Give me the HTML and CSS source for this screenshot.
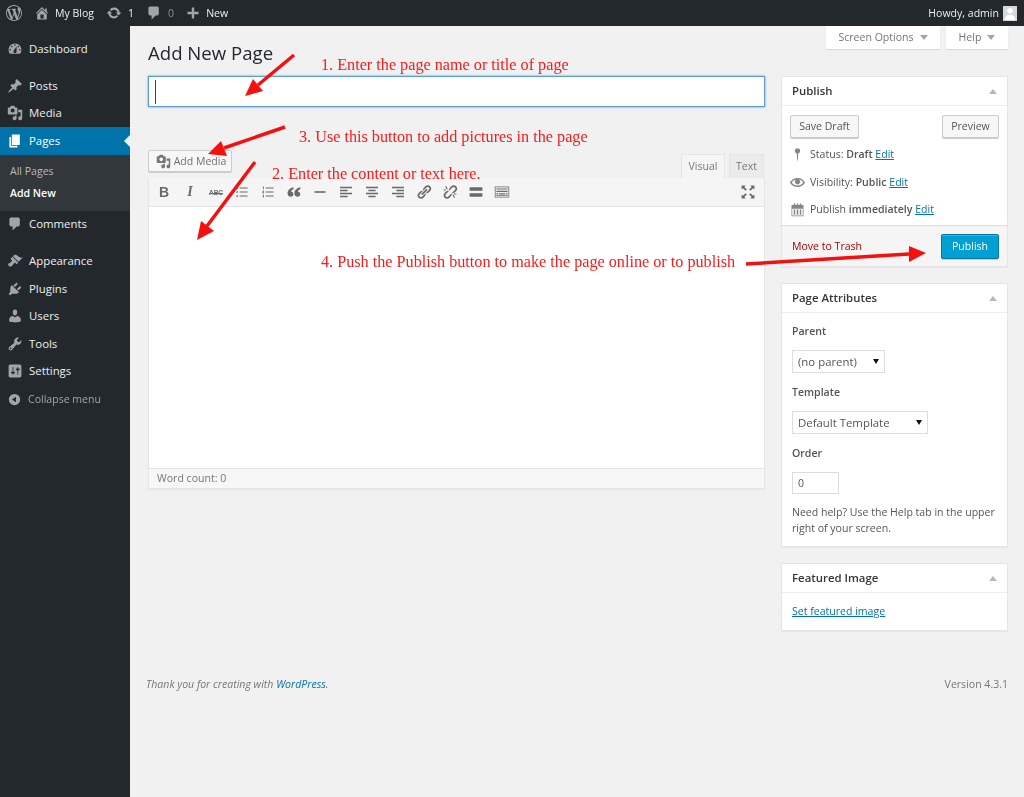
FILE: index.html
```html
<!DOCTYPE html>
<html lang="en">
<head>
<meta charset="utf-8">
<title>Add New Page</title>
<link rel="stylesheet" href="styles.css">
</head>
<body>
<header class="topbar">
  <div class="top-left">
    <svg class="ic-wp" viewBox="0 0 20 20"><path d="M20 10c0-5.51-4.49-10-10-10C4.48 0 0 4.49 0 10c0 5.52 4.48 10 10 10 5.51 0 10-4.48 10-10zM7.78 15.37L4.37 6.22c.55-.02 1.17-.08 1.17-.08.5-.06.44-1.13-.06-1.11 0 0-1.45.11-2.37.11-.18 0-.37 0-.58-.01C4.12 2.69 6.87 1.11 10 1.11c2.33 0 4.45.87 6.05 2.34-.68-.11-1.65.39-1.65 1.58 0 .74.45 1.36.9 2.1.35.61.55 1.36.55 2.46 0 1.49-1.4 5-1.4 5l-3.03-8.37c.54-.02.82-.17.82-.17.5-.05.44-1.25-.06-1.22 0 0-1.44.12-2.38.12-.87 0-2.33-.12-2.33-.12-.5-.03-.56 1.2-.06 1.22l.92.08 1.26 3.41zM17.41 10c.24-.64.74-1.87.43-4.25.7 1.29 1.05 2.71 1.05 4.25 0 3.29-1.73 6.24-4.4 7.78.97-2.59 1.94-5.2 2.92-7.78zM6.1 18.09C3.12 16.65 1.11 13.53 1.11 10c0-1.3.23-2.48.72-3.59C3.25 10.3 4.67 14.2 6.1 18.09zm4.03-6.63l2.58 6.98c-.86.29-1.76.45-2.71.45-.79 0-1.57-.11-2.29-.33.81-2.38 1.62-4.74 2.42-7.1z"/></svg>
    <span class="top-item home"><svg viewBox="0 0 20 20"><path d="M16 8.5l1.53 1.53-1.06 1.06L10 4.62l-6.47 6.47-1.06-1.06L10 2.5l4 4v-2h2v4zm-6-2.46l6 5.99V18H4v-5.97zM12 17v-5H8v5h4z"/></svg>My Blog</span>
    <span class="top-item upd"><svg viewBox="0 0 20 20"><path d="M10.2 3.28c3.53 0 6.43 2.61 6.92 6h2.08l-3.5 4-3.5-4h2.32c-.45-1.97-2.21-3.45-4.32-3.45-1.45 0-2.73.71-3.54 1.78L4.95 5.66C6.23 4.2 8.11 3.28 10.2 3.28zm-.4 13.44c-3.52 0-6.43-2.61-6.92-6H.8l3.5-4c1.17 1.33 2.33 2.67 3.5 4H5.48c.45 1.97 2.21 3.45 4.32 3.45 1.45 0 2.73-.71 3.54-1.78l1.71 1.95c-1.28 1.46-3.15 2.38-5.25 2.38z"/></svg>1</span>
    <span class="top-item cmt"><svg viewBox="0 0 20 20"><path d="M5 2h9c1.1 0 2 .9 2 2v7c0 1.1-.9 2-2 2h-2l-5 5v-5H5c-1.1 0-2-.9-2-2V4c0-1.1.9-2 2-2z"/></svg><span class="dim">0</span></span>
    <span class="top-item new"><svg viewBox="0 0 20 20"><path d="M17 8.5v3h-5.5V17h-3v-5.500H3v-3h5.500V3h3v5.500H17z"/></svg>New</span>
  </div>
  <div class="top-right">Howdy, admin
    <span class="avatar"><svg viewBox="0 0 16 16"><circle cx="8" cy="5.500" r="3.200"/><path d="M2 16c0-4 2.500-6 6-6s6 2 6 6z"/></svg></span>
  </div>
</header>

<div class="shell">
  <nav class="side">
    <a class="mi first"><svg viewBox="0 0 20 20"><path d="M3.76 16h12.48c1.1-1.37 1.76-3.11 1.76-5 0-4.42-3.58-8-8-8s-8 3.58-8 8c0 1.89.66 3.630 1.76 5zM10 4c.55 0 1 .45 1 1s-.45 1-1 1-1-.45-1-1 .45-1 1-1zM6 6c.55 0 1 .45 1 1s-.45 1-1 1-1-.45-1-1 .45-1 1-1zm8 0c.55 0 1 .45 1 1s-.45 1-1 1-1-.45-1-1 .45-1 1-1zm-5.37 5.55L12 7v6c0 1.1-.9 2-2 2s-2-.9-2-2c0-.57.24-1.08.63-1.45zM4 10c.55 0 1 .45 1 1s-.45 1-1 1-1-.45-1-1 .45-1 1-1zm12 0c.55 0 1 .45 1 1s-.45 1-1 1-1-.45-1-1 .45-1 1-1z"/></svg>Dashboard</a>
    <a class="mi gap"><svg viewBox="0 0 20 20"><path d="M10.44 3.02l1.82-1.82 6.36 6.35-1.83 1.82c-1.05-.68-2.48-.57-3.41.36l-.75.75c-.92.93-1.04 2.35-.35 3.41l-1.83 1.82-2.41-2.41-2.8 2.79c-.42.42-3.38 2.71-3.8 2.29s1.86-3.39 2.28-3.81l2.79-2.79L4.1 9.36l1.83-1.82c1.05.69 2.48.57 3.41-.36l.75-.75c.93-.92 1.05-2.35.35-3.41z"/></svg>Posts</a>
    <a class="mi"><svg viewBox="0 0 20 20"><path d="M13 11V4c0-.55-.45-1-1-1h-1.67L9 1H5L3.67 3H2c-.55 0-1 .45-1 1v7c0 .55.45 1 1 1h10c.55 0 1-.45 1-1zM7 4.500c1.380 0 2.500 1.120 2.500 2.500S8.380 9.500 7 9.500 4.500 8.380 4.500 7 5.620 4.500 7 4.500zM14 6h5v10.500c0 1.380-1.120 2.500-2.500 2.500S14 17.880 14 16.500s1.120-2.500 2.500-2.500c.17 0 .34.02.5.05V9h-3V6zm-4 8.050V13h2v3.500c0 1.380-1.120 2.500-2.500 2.500S7 17.880 7 16.500 8.120 14 9.500 14c.17 0 .34.02.5.05z"/></svg>Media</a>
    <a class="mi active"><svg viewBox="0 0 20 20"><path d="M6 15V2h10v13H6zm-1 1h8v2H3V5h2v11z"/></svg>Pages</a>
    <div class="submenu">
      <a class="sub">All Pages</a>
      <a class="sub cur">Add New</a>
    </div>
    <a class="mi"><svg viewBox="0 0 20 20"><path d="M5 2h9c1.100 0 2 .9 2 2v7c0 1.100-.9 2-2 2h-2l-5 5v-5H5c-1.100 0-2-.9-2-2V4c0-1.100.9-2 2-2z"/></svg>Comments</a>
    <a class="mi gap"><svg viewBox="0 0 20 20"><path d="M14.480 11.060L7.410 3.990l1.500-1.500c.5-.56 2.300-.47 3.510.32 1.210.8 1.430 1.280 2.910 2.100 1.180.64 2.450 1.260 4.450.85zm-.71.71L6.700 4.700 4.930 6.470c-.39.39-.39 1.020 0 1.410l1.060 1.060c.39.39.39 1.030 0 1.420-.6.6-1.430 1.110-2.210 1.690-.35.26-.7.53-1.010.84C1.430 13.230.91 14.800 2.300 16.200s2.970.86 4.310-.47c.32-.32.59-.67.85-1.020.58-.78 1.070-1.600 1.670-2.200.39-.39 1.030-.39 1.420 0l1.060 1.060c.39.39 1.020.39 1.410 0z"/></svg>Appearance</a>
    <a class="mi"><svg viewBox="0 0 20 20"><path d="M13.110 4.360L9.870 7.600 8 5.730l3.240-3.240c.35-.34 1.050-.2 1.560.32.52.51.66 1.210.31 1.550zm-8 1.770l.91-1.120 9.010 9.010-1.190.84c-.71.71-2.630 1.160-3.820 1.160H6.140L4.900 17.260c-.59.59-1.540.59-2.120 0-.59-.58-.59-1.530 0-2.120l1.240-1.240v-3.880c0-1.130.4-3.190 1.090-3.890zm7.260 3.970l3.240-3.240c.34-.35 1.040-.21 1.550.31.52.51.66 1.210.31 1.550l-3.240 3.250z"/></svg>Plugins</a>
    <a class="mi"><svg viewBox="0 0 20 20"><path d="M10 9.250c-2.270 0-2.730-3.440-2.730-3.440C7 4.020 7.820 2 9.970 2c2.160 0 2.980 2.020 2.710 3.810 0 0-.41 3.440-2.680 3.440zm0 2.570L12.720 10c2.390 0 4.520 2.330 4.520 4.530v2.490s-3.650 1.130-7.240 1.130c-3.650 0-7.240-1.130-7.240-1.130v-2.490c0-2.250 1.940-4.480 4.470-4.480z"/></svg>Users</a>
    <a class="mi"><svg viewBox="0 0 20 20"><path d="M16.680 9.770c-1.340 1.340-3.300 1.670-4.950.99l-5.410 6.520c-.99.99-2.590.99-3.580 0s-.99-2.59 0-3.570l6.520-5.420c-.68-1.650-.35-3.610.99-4.950 1.280-1.280 3.120-1.620 4.720-1.060l-2.890 2.890 2.820 2.820 2.860-2.870c.53 1.580.18 3.390-1.080 4.650zM3.810 16.210c.4.39 1.040.39 1.430 0 .4-.4.4-1.040 0-1.430-.39-.4-1.030-.4-1.430 0-.39.39-.39 1.030 0 1.430z"/></svg>Tools</a>
    <a class="mi"><svg viewBox="0 0 20 20"><path d="M18 16V4c0-1.100-.9-2-2-2H4c-1.100 0-2 .9-2 2v12c0 1.100.9 2 2 2h12c1.100 0 2-.9 2-2zM8 11h1c.55 0 1 .45 1 1s-.45 1-1 1H8v1.500c0 .28-.22.5-.5.5s-.5-.22-.5-.5V13H6c-.55 0-1-.45-1-1s.45-1 1-1h1V5.500c0-.28.22-.5.5-.5s.5.22.5.5V11zm5-2h-1c-.55 0-1-.45-1-1s.45-1 1-1h1V5.500c0-.28.22-.5.5-.5s.5.22.5.5V7h1c.55 0 1 .45 1 1s-.45 1-1 1h-1v5.500c0 .28-.22.5-.5.5s-.5-.22-.5-.5V9z"/></svg>Settings</a>
    <a class="mi collapse"><svg viewBox="0 0 20 20"><path d="M10 2.500a7.500 7.500 0 1 0 0 15 7.500 7.500 0 0 0 0-15zm2 3.800v7.400L6.500 10z"/></svg>Collapse menu</a>
  </nav>

  <main class="content">
    <div class="head">
      <h1>Add New Page</h1>
      <div class="tabs-top">
        <span class="toptab so">Screen Options<i class="tri"></i></span>
        <span class="toptab hl">Help<i class="tri"></i></span>
      </div>
    </div>
    <div class="cols">
      <section class="left">
        <div class="titlebox"><span class="caret"></span></div>
        <div class="media-row">
          <span class="btn addmedia"><svg viewBox="0 0 20 20"><path d="M13 11V4c0-.55-.45-1-1-1h-1.670L9 1H5L3.670 3H2c-.55 0-1 .45-1 1v7c0 .55.45 1 1 1h10c.55 0 1-.45 1-1zM7 4.500c1.380 0 2.500 1.120 2.500 2.500S8.380 9.500 7 9.500 4.500 8.380 4.500 7 5.620 4.500 7 4.500zM14 6h5v10.500c0 1.380-1.120 2.500-2.500 2.500S14 17.880 14 16.500s1.120-2.500 2.500-2.500c.17 0 .34.02.5.05V9h-3V6zm-4 8.050V13h2v3.500c0 1.380-1.120 2.500-2.500 2.500S7 17.880 7 16.500 8.120 14 9.500 14c.17 0 .34.02.5.05z"/></svg>Add Media</span>
          <div class="edtabs"><span class="edtab on">Visual</span><span class="edtab">Text</span></div>
        </div>
        <div class="editor">
          <div class="toolbar">
            <span class="tb tb-b">B</span>
            <span class="tb tb-i">I</span>
            <span class="tb tb-abc">ABC</span>
            <span class="tb"><svg viewBox="0 0 20 20"><path d="M3 4h2v2H3zM3 9h2v2H3zM3 14h2v2H3zM7 4.500h10v1H7zM7 9.500h10v1H7zM7 14.500h10v1H7z"/></svg></span>
            <span class="tb"><svg viewBox="0 0 20 20"><path d="M7 4.500h10v1H7zM7 9.500h10v1H7zM7 14.500h10v1H7zM3.500 3H5v3.500H4V4h-.5zM3 8.500h2v2H4v.5h1v.500H3v-1.500h1v-.5H3zM3 13.500h2v3.500H3v-.5h1v-.6h-.6v-.5H4V14H3z"/></svg></span>
            <span class="tb"><svg viewBox="0 0 20 20"><path d="M9.500 4C5.500 5 2 7 2 11.500 2 14 3.500 16 6 16c2 0 3.300-1.400 3.300-3.200 0-1.700-1.100-3-2.800-3.100.3-1.500 1.500-2.700 3-3.300zM18 4c-4 1-7.500 3-7.500 7.500 0 2.500 1.500 4.500 4 4.500 2 0 3.300-1.400 3.300-3.200 0-1.700-1.100-3-2.800-3.100.3-1.500 1.500-2.700 3-3.300z"/></svg></span>
            <span class="tb"><svg viewBox="0 0 20 20"><path d="M3 9h14v2H3z"/></svg></span>
            <span class="tb"><svg viewBox="0 0 20 20"><path d="M2.500 3.500h15v1.800h-15zM2.500 7.300h9.500v1.800H2.500zM2.500 11h15v1.800h-15zM2.500 14.800h9.500v1.800H2.500z"/></svg></span>
            <span class="tb"><svg viewBox="0 0 20 20"><path d="M2.500 3.500h15v1.800h-15zM5.500 7.300h9v1.800h-9zM2.500 11h15v1.800h-15zM5.500 14.800h9v1.800h-9z"/></svg></span>
            <span class="tb"><svg viewBox="0 0 20 20"><path d="M2.500 3.500h15v1.800h-15zM8 7.300h9.500v1.800H8zM2.500 11h15v1.800h-15zM8 14.800h9.500v1.800H8z"/></svg></span>
            <span class="tb"><svg viewBox="0 0 20 20"><path d="M17.740 2.760c1.680 1.690 1.680 4.410 0 6.100l-1.530 1.520c-1.120 1.120-2.700 1.470-4.140 1.090l2.620-2.610.76-.77.76-.76c.84-.84.84-2.200 0-3.040-.84-.85-2.200-.85-3.040 0l-.77.76-3.380 3.380c-.37-1.440-.02-3.020 1.100-4.140l1.520-1.530c1.690-1.680 4.420-1.680 6.100 0zM8.590 13.430l5.340-5.340c.42-.42.42-1.100 0-1.520-.44-.43-1.130-.39-1.530 0l-5.330 5.340c-.42.42-.42 1.100 0 1.520.44.43 1.130.39 1.520 0zm-.76 2.290l4.140-4.150c.38 1.440.03 3.020-1.090 4.140l-1.520 1.530c-1.690 1.680-4.410 1.680-6.100 0-1.680-1.680-1.680-4.420 0-6.100l1.530-1.520c1.120-1.120 2.700-1.470 4.140-1.100l-4.140 4.150c-.85.84-.85 2.200 0 3.050.84.84 2.200.84 3.040 0z"/></svg></span>
            <span class="tb"><svg viewBox="0 0 20 20"><path d="M17.740 2.760c1.680 1.690 1.680 4.410 0 6.100l-1.530 1.520c-1.120 1.120-2.700 1.470-4.140 1.090l2.620-2.610.76-.77.76-.76c.84-.84.84-2.200 0-3.040-.84-.85-2.200-.85-3.040 0l-.77.76-3.380 3.380c-.37-1.440-.02-3.020 1.100-4.140l1.520-1.530c1.690-1.680 4.420-1.680 6.100 0zM7.830 15.720l4.140-4.150c.38 1.440.03 3.020-1.090 4.140l-1.520 1.530c-1.690 1.680-4.410 1.680-6.100 0-1.680-1.680-1.680-4.420 0-6.100l1.530-1.520c1.120-1.120 2.700-1.470 4.140-1.100l-4.140 4.150c-.85.84-.85 2.200 0 3.050.84.84 2.200.84 3.040 0zM4 3l1.200-.6 2 4-1.200.6zM13 13.500l1.200-.6 2 4-1.200.6zM2 7h3v1.200H2zM15 12h3v1.200h-3z"/></svg></span>
            <span class="tb"><svg viewBox="0 0 20 20"><path d="M2 4h16v4.500H2zM2 11.500h16V16H2z"/></svg></span>
            <span class="tb"><svg viewBox="0 0 20 20"><path d="M1 3h18v14H1zm1 1v12h16V4zm1 1.500h14V7H3zM3 8.500h14V10H3zM3 11.500h2V13H3zM6 11.500h8V13H6zM15 11.500h2V13h-2zM3 14h14v1H3z" fill-rule="evenodd"/></svg></span>
            <span class="tb tb-full"><svg viewBox="0 0 20 20"><path d="M2 2h5L5.400 3.600 8.500 7 7 8.500 3.600 5.400 2 7zM18 2v5l-1.600-1.600L13 8.500 11.500 7l3.100-3.400L13 2zM2 18v-5l1.600 1.600L7 11.500 8.500 13l-3.100 3.400L7 18zM18 18h-5l1.600-1.600L11.500 13l1.500-1.500 3.400 3.100L18 13z"/></svg></span>
          </div>
          <div class="edit-area"></div>
          <div class="statusbar">Word count: 0</div>
        </div>
      </section>

      <aside class="right">
        <section class="box">
          <h2 class="box-h">Publish<i class="tri up"></i></h2>
          <div class="pub-body">
            <div class="pub-btns"><span class="btn">Save Draft</span><span class="btn">Preview</span></div>
            <div class="pub-row r1"><svg class="pin" viewBox="0 0 20 20"><circle cx="10" cy="5" r="3.500"/><path d="M9 7h2l-.5 11h-1z"/></svg><span>Status: <b>Draft</b> <a>Edit</a></span></div>
            <div class="pub-row"><svg viewBox="0 0 20 20"><path d="M19.700 9.400C17.700 6 14 3.900 10 3.900S2.300 6 .3 9.400L0 10l.3.6c2 3.400 5.700 5.500 9.700 5.500s7.700-2.100 9.700-5.500l.3-.6-.3-.6zM10 14.100c-3.100 0-6-1.600-7.700-4.100C3.600 8 5.700 6.600 8 6.100c-.9.6-1.500 1.700-1.500 2.900 0 1.900 1.600 3.500 3.500 3.500s3.500-1.600 3.500-3.500c0-1.200-.6-2.300-1.500-2.900 2.300.5 4.400 1.900 5.700 3.900-1.700 2.500-4.600 4.100-7.700 4.100z"/></svg><span>Visibility: <b>Public</b> <a>Edit</a></span></div>
            <div class="pub-row"><svg viewBox="0 0 20 20"><path fill-rule="evenodd" d="M2 4h3V2h2v2h2V2h2v2h2V2h2v2h3v15H2zm1 5v9h14V9zM5 10h2v7H5zM9 10h2v7H9zM13 10h2v7h-2z"/></svg><span>Publish <b>immediately</b> <a>Edit</a></span></div>
          </div>
          <div class="pub-foot"><a class="trash">Move to Trash</a><span class="btn primary">Publish</span></div>
        </section>

        <section class="box">
          <h2 class="box-h">Page Attributes<i class="tri up"></i></h2>
          <div class="attr">
            <div class="lbl">Parent</div>
            <div class="sel w-parent">(no parent)<i class="tri dark"></i></div>
            <div class="lbl">Template</div>
            <div class="sel w-template">Default Template<i class="tri dark"></i></div>
            <div class="lbl">Order</div>
            <div class="num">0</div>
            <p class="hint">Need help? Use the Help tab in the upper right of your screen.</p>
          </div>
        </section>

        <section class="box">
          <h2 class="box-h">Featured Image<i class="tri up"></i></h2>
          <div class="feat"><a>Set featured image</a></div>
        </section>
      </aside>
    </div>
    <footer class="foot"><em>Thank you for creating with <a>WordPress</a>.</em><span class="ver">Version 4.3.1</span></footer>
  </main>
</div>

<div class="notes">
  <svg class="arrows" viewBox="0 0 1024 797">
    <g class="arrow">
      <line x1="294" y1="55" x2="258" y2="85"/><polygon points="245,96 263,91 253,79"/>
      <line x1="285" y1="127" x2="224" y2="148"/><polygon points="208,154 227,156 221,141"/>
      <line x1="255" y1="162" x2="207" y2="226"/><polygon points="197,240 214,231 201,221"/>
      <line x1="746" y1="264" x2="909" y2="254"/><polygon points="926,253 909,246 909,262"/>
    </g>
  </svg>
  <span class="note n1">1. Enter the page name or title of page</span>
  <span class="note n3">3. Use this button to add pictures in the page</span>
  <span class="note n2">2. Enter the content or text here.</span>
  <span class="note n4">4. Push the Publish button to make the page online or to publish</span>
</div>
</body>
</html>
```
FILE: styles.css
```css
* { box-sizing: border-box; }
html, body { margin: 0; padding: 0; }
body {
  position: relative;
  min-height: 797px;
  background: #f1f1f1;
  color: #444;
  font-family: "Open Sans", "Liberation Sans", sans-serif;
  font-size: 10.56px;
  line-height: 1.4;
  overflow: hidden;
}
svg { display: block; fill: currentColor; }
a { color: #0073aa; }
/* the reference is a downscaled capture, so everything is slightly soft */
.topbar, .shell { filter: blur(.3px); }

/* top bar */
.topbar {
  height: 26px;
  background: #23282d;
  color: #eee;
  display: flex;
  justify-content: space-between;
  align-items: center;
}
.top-left { display: flex; align-items: center; }
.ic-wp { width: 16px; height: 16px; margin-left: 6px; color: #a0a5aa; }
.top-item { display: flex; align-items: center; }
.top-item svg { width: 16px; height: 16px; color: #a0a5aa; }
.home { margin-left: 12px; }
.home svg { margin-right: 5px; }
.upd { margin-left: 12px; }
.upd svg { margin-right: 6px; }
.cmt { margin-left: 12px; }
.cmt svg { margin-right: 6px; }
.dim { color: #8a8f94; }
.new { margin-left: 11px; }
.new svg { margin-right: 5px; }
.top-right { display: flex; align-items: center; gap: 4px; padding-right: 7px; }
.avatar {
  width: 14px; height: 15px;
  background: #d8d8d8;
  color: #fff;
  overflow: hidden;
}

/* shell */
.shell { display: flex; min-height: 771px; }
.side {
  flex: 0 0 130px;
  background: #23282d;
  padding-top: 9px;
  color: #eee;
}
.mi {
  display: flex;
  align-items: center;
  height: 27.5px;
  padding-left: 7px;
  font-size: 11.4px;
  color: #eee;
}
.mi svg { width: 16px; height: 16px; margin-right: 6px; color: #a0a5aa; }
.gap { margin-top: 9.5px; }
.active { background: #0073aa; color: #fff; position: relative; }
.active svg { color: #fff; }
.active::after {
  content: "";
  position: absolute;
  right: 0; top: 8px;
  border: 6px solid transparent;
  border-right-color: #f1f1f1;
  border-left-width: 0;
}
.submenu {
  background: #32373c;
  height: 56px;
  padding-top: 5px;
}
.sub {
  display: block;
  height: 22px;
  line-height: 22px;
  padding-left: 10px;
  font-size: 10.56px;
  color: #b4b9be;
}
.sub.cur { color: #fff; font-weight: 600; }
.collapse { font-size: 10.56px; color: #a0a5aa; margin-top: 1px; }
.collapse svg { width: 15px; height: 15px; margin-right: 6px; }

/* content */
.content { flex: 1; min-width: 0; padding: 0 16px 0 18px; }
.head {
  height: 50px;
  display: flex;
  justify-content: space-between;
  align-items: flex-start;
}
h1 {
  margin: 12px 0 0;
  font-size: 18.6px;
  font-weight: 400;
  line-height: 30px;
  color: #23282d;
}
.tabs-top { display: flex; gap: 6px; }
.toptab {
  height: 23px;
  background: #fff;
  box-shadow: 0 1px 1px rgba(0,0,0,.1);
  color: #72777c;
  display: flex;
  align-items: center;
  justify-content: center;
  gap: 6px;
}
.so { width: 114px; }
.hl { width: 62px; }
.tri {
  display: inline-block;
  border: 4px solid transparent;
  border-top: 5px solid #a0a5aa;
  border-bottom-width: 0;
}
.tri.up { border-top-width: 0; border-bottom: 5px solid #b4b9be; border-top-color: transparent; }
.tri.dark { border-top-color: #111; border-width: 5px 3px 0; }

.cols { display: flex; gap: 16px; align-items: flex-start; }
.left { flex: 1; min-width: 0; }
.right { flex: 0 0 227px; display: flex; flex-direction: column; gap: 16px; }

.titlebox {
  height: 31px;
  background: #fff;
  border: 1px solid #5b9dd9;
  box-shadow: 0 0 2px rgba(30,140,190,.8);
  padding: 3px 6px;
}
.caret { display: block; width: 1px; height: 24px; background: #444; }
.media-row {
  height: 28px;
  margin-top: 43px;
  display: flex;
  justify-content: space-between;
  align-items: flex-start;
}
.btn {
  display: inline-flex;
  align-items: center;
  justify-content: center;
  height: 23px;
  padding: 0 8px;
  background: #f7f7f7;
  border: 1px solid #ccc;
  border-radius: 2px;
  box-shadow: 0 1px 0 #ccc;
  color: #555;
  white-space: nowrap;
}
.addmedia { height: 22px; padding: 0 4px 0 6px; width: 84px; color: #6f6f6f; }
.addmedia svg { width: 15px; height: 15px; margin-right: 3px; color: #72777c; flex: none; }
.edtabs { display: flex; align-self: flex-end; gap: 4px; padding-right: 1px; }
.edtab {
  width: 35px;
  height: 24px;
  display: flex;
  align-items: center;
  justify-content: center;
  background: #ebebeb;
  border: 1px solid #e5e5e5;
  border-bottom: 0;
  color: #72777c;
}
.edtab.on { width: 44px; background: #f5f5f5; }

.editor {
  background: #fff;
  border: 1px solid #e5e5e5;
  border-top: 0;
  box-shadow: 0 1px 1px rgba(0,0,0,.04);
}
.toolbar {
  height: 29px;
  background: #f5f5f5;
  border-bottom: 1px solid #e5e5e5;
  display: flex;
  align-items: center;
  padding-left: 2px;
  color: #555;
}
.tb {
  flex: 0 0 26px;
  height: 26px;
  display: flex;
  align-items: center;
  justify-content: center;
  color: #6a6a6a;
}
.tb svg { width: 16px; height: 16px; }
.tb-b { font: bold 14px "Liberation Sans", sans-serif; }
.tb-i { font: italic bold 14px "Liberation Serif", serif; }
.tb-abc { font: bold 6.500px "Liberation Sans", sans-serif; text-decoration: line-through; }
.tb-full { margin-left: auto; margin-right: 3px; }
.edit-area { height: 261px; background: #fff; }
.statusbar {
  height: 20px;
  background: #f7f7f7;
  border-top: 1px solid #e5e5e5;
  padding-left: 8px;
  line-height: 19px;
  color: #72777c;
}

/* boxes */
.box {
  background: #fff;
  border: 1px solid #e5e5e5;
  box-shadow: 0 1px 1px rgba(0,0,0,.04);
}
.box-h {
  margin: 0;
  height: 29px;
  border-bottom: 1px solid #eee;
  padding: 0 10px;
  display: flex;
  align-items: center;
  justify-content: space-between;
  font-size: 11.4px;
  font-weight: 600;
  color: #32373c;
}
.pub-body { padding: 9px 8px 0; height: 119px; }
.pub-btns { display: flex; justify-content: space-between; }
.pub-btns .btn:first-child { width: 69px; }
.pub-btns .btn:last-child { width: 57px; }
.pub-row {
  display: flex;
  align-items: center;
  height: 27.5px;
  color: #555;
}
.pub-row.r1 { margin-top: 3px; }
.pub-row svg { width: 15px; height: 15px; margin-right: 5px; color: #82878c; flex: none; }
.pub-row b { font-weight: 600; }
.pub-row a { text-decoration: underline; }
.pub-foot {
  height: 41px;
  background: #f5f5f5;
  border-top: 1px solid #ddd;
  padding: 0 8px 0 10px;
  display: flex;
  align-items: center;
  justify-content: space-between;
}
.trash { color: #a00; }
.primary {
  width: 58px;
  height: 25px;
  background: #00a0d2;
  border-color: #0073aa;
  box-shadow: inset 0 1px 0 rgba(120,200,230,.5), 0 1px 0 rgba(0,0,0,.15);
  color: #fff;
}
.attr { padding: 9px 10px 0; height: 233px; }
.lbl { font-weight: 600; color: #555; height: 19px; line-height: 19px; }
.sel {
  height: 23px;
  margin: 9px 0 10px;
  border: 1px solid #ddd;
  display: flex;
  align-items: center;
  justify-content: space-between;
  padding: 0 5px;
  color: #555;
  font-size: 11.4px;
}
.w-parent { width: 93px; }
.w-template { width: 136px; }
.num {
  width: 47px;
  height: 22px;
  margin: 9px 0 0;
  border: 1px solid #ddd;
  padding: 0 5px;
  line-height: 20px;
  color: #555;
}
.hint { margin: 11px 0 0; line-height: 15.500px; color: #555; }
.feat { padding: 10px; height: 37px; line-height: 16px; }
.feat a { text-decoration: underline; }

.foot {
  display: flex;
  justify-content: space-between;
  margin-top: 45px;
  color: #72777c;
  line-height: 16px;
}
.foot em { margin-left: -2px; }
.foot a { color: #0073aa; }

/* annotations laid over the page */
.notes { position: absolute; inset: 0; pointer-events: none; }
.arrows { position: absolute; left: 0; top: 0; width: 1024px; height: 797px; }
.arrow line { stroke: #f51010; stroke-width: 3.500px; }
.arrow polygon { fill: #f51010; }
.note {
  position: absolute;
  font-family: "Liberation Serif", serif;
  font-size: 16.2px;
  line-height: 18px;
  color: #f51c1c;
  white-space: nowrap;
}
.n1 { left: 321px; top: 56px; }
.n3 { left: 299px; top: 128px; }
.n2 { left: 272px; top: 165px; }
.n4 { left: 321px; top: 253px; }
```
